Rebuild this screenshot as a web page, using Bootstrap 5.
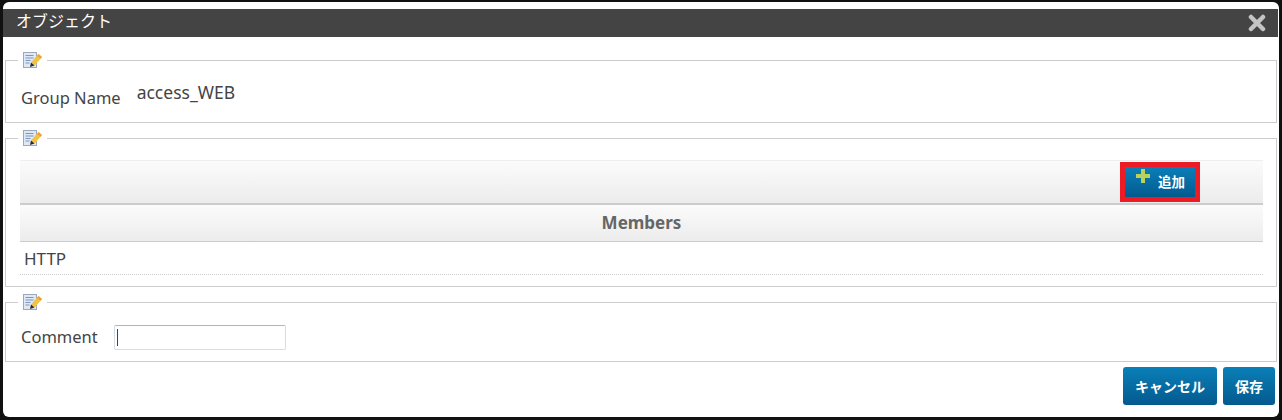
<!DOCTYPE html>
<html lang="ja">
<head>
  <meta charset="UTF-8">
  <title>オブジェクト</title>
  <link href="https://cdn.jsdelivr.net/npm/bootstrap@5.3.0/dist/css/bootstrap.min.css" rel="stylesheet">
  <style>
    html, body { height: 420px; overflow: hidden; background: #111; }
    body { font-family: "Noto Sans", "Noto Sans CJK JP", sans-serif; font-size: 16.5px; color: #444; }
    .dlg { height: 415px; margin: 2px 3px 3px 3px; background: #fff; border-radius: 6px; padding-top: 7px; }
    .dlg-title { height: 28px; background: #444; color: #fff; font-size: 16px; line-height: 24px; padding: 0 12px 4px 13px; margin-right: 1px; }
    .dlg-x { width: 18px; height: 18px; margin: 4px 0 0 0; }
    .pane { margin: 0 2px; border: 1px solid #ccc; padding: 0 13px 0 14px; }
    fieldset.pane { min-width: 0; }
    .pane legend { float: none; width: auto; margin: 0 0 0 -2px; padding: 0 5px; font-size: 0; line-height: 0; height: 18px; }
    .pane-a { margin-top: 14px; height: 72px; }
    .pane-b { margin-top: 6px; height: 158px; }
    .pane-c { margin-top: 6px; height: 69px; }
    .name-lbl { margin: 17px 0 0 1px; }
    .name-val { margin: 10px 0 0 16px; font-size: 17.5px; }
    .tool-bar { height: 45px; margin-top: 13px; background: linear-gradient(#fbfbfb, #ececec); border-top: 1px solid #eee; border-bottom: 2px solid #ccc; padding-right: 63px; }
    .add-wrap { border: 5px solid #ed1c24; height: 40px; margin-top: 1px; }
    .btn-blue { background: linear-gradient(#0a7fb8, #045a8e); color: #fff; font-weight: 700; border: 0; padding: 0; }
    .btn-blue:hover { background: #045a8e; color: #fff; }
    .btn-add { width: 70px; height: 30px; border-radius: 0; position: relative; padding-left: 23px; font-size: 13.5px; }
    .ico-plus { position: absolute; left: 10px; top: 1px; width: 16px; height: 16px; }
    .mem-tbl { margin: 0; color: #444; }
    .mem-tbl th { height: 36px; padding: 0; text-align: center; font-size: 17px; color: #666; background: linear-gradient(#fbfbfb, #ececec); border-bottom: 1px solid #ccc; vertical-align: middle; }
    .mem-tbl td { height: 33px; padding: 2px 4px 0; font-size: 17px; border-bottom: 1px dotted #ccc; vertical-align: middle; }
    .cmt-row { margin: 14px 0 0 1px; }
    .cmt-input { width: 172px; height: 25px; margin-left: 16px; border: 1px solid #d3dde6; border-top-color: #a9b8c6; border-radius: 2px; padding: 0 2px; outline: 0; }
    .cmt-caret { width: 1px; height: 17px; background: #444; left: 3px; top: 4px; }
    .dlg-foot { padding: 5px 4px 0 0; gap: 6px; }
    .btn-foot { height: 38px; border-radius: 3px; font-size: 14px; }
    .btn-cancel { width: 94px; }
    .btn-save { width: 52px; }
  </style>
</head>
<body>
<svg width="0" height="0" class="d-block" aria-hidden="true">
  <symbol id="note" viewBox="0 0 19 18">
    <rect x="0.500" y="1.500" width="13" height="15" fill="#dfe8f3" stroke="#9aa9c2"/>
    <path d="M2.500 4.500h8M2.500 7h8M2.500 9.500h5M2.500 12h4" stroke="#7c97c4"/>
    <path d="M8 11.500 15.500 3 19 6l-7.500 8.500z" fill="#f3c243"/>
    <path d="M15.500 3 19 6l-1.500 1.700L14 4.700z" fill="#e8a33a"/>
    <path d="M7 16l1-4.500 3.500 3z" fill="#2a2a2a"/>
  </symbol>
</svg>
<div class="dlg d-flex flex-column">
  <div class="dlg-title d-flex justify-content-between align-items-center">
    <span>オブジェクト</span>
    <svg class="dlg-x" viewBox="0 0 18 18"><path d="M3 3 15 15M15 3 3 15" stroke="#c4c4c4" stroke-width="4.500" stroke-linecap="round"/></svg>
  </div>

  <fieldset class="pane pane-a">
    <legend><svg width="19" height="18"><use href="#note"/></svg></legend>
    <div class="d-flex align-items-start">
      <div class="name-lbl">Group Name</div>
      <div class="name-val">access_WEB</div>
    </div>
  </fieldset>

  <fieldset class="pane pane-b">
    <legend><svg width="19" height="18"><use href="#note"/></svg></legend>
    <div class="tool-bar d-flex justify-content-end">
      <div class="add-wrap">
        <button type="button" class="btn btn-blue btn-add">
          <svg class="ico-plus" viewBox="0 0 16 16"><path d="M6 1h4v5h5v4h-5v5H6v-5H1V6h5z" fill="#b9d25a"/></svg>
          追加
        </button>
      </div>
    </div>
    <table class="table mem-tbl">
      <thead><tr><th>Members</th></tr></thead>
      <tbody><tr><td>HTTP</td></tr></tbody>
    </table>
  </fieldset>

  <fieldset class="pane pane-c">
    <legend><svg width="19" height="18"><use href="#note"/></svg></legend>
    <div class="d-flex align-items-center cmt-row">
      <label for="cmt">Comment</label>
      <div class="position-relative">
        <input id="cmt" type="text" class="cmt-input d-block">
        <span class="cmt-caret position-absolute ms-3"></span>
      </div>
    </div>
  </fieldset>

  <div class="dlg-foot d-flex justify-content-end">
    <button type="button" class="btn btn-blue btn-foot btn-cancel">キャンセル</button>
    <button type="button" class="btn btn-blue btn-foot btn-save">保存</button>
  </div>
</div>
<script src="https://cdn.jsdelivr.net/npm/bootstrap@5.3.0/dist/js/bootstrap.bundle.min.js"></script>
</body>
</html>
